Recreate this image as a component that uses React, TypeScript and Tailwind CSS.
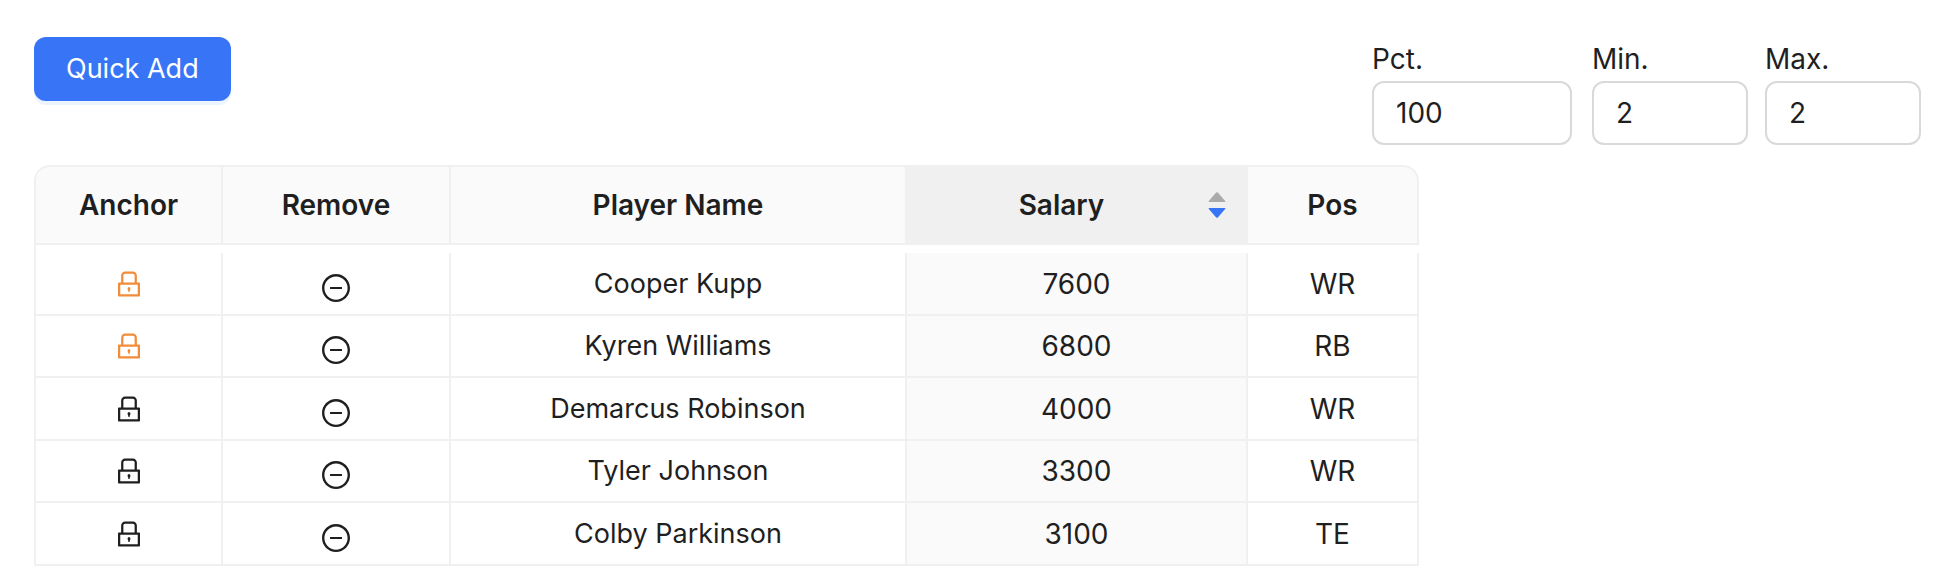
import { useState } from 'react';
import { AiOutlineLock, AiOutlineMinusCircle } from 'react-icons/ai';

interface Player {
  name: string;
  salary: number;
  pos: string;
  anchored: boolean;
}

const INITIAL_PLAYERS: Player[] = [
  { name: 'Cooper Kupp', salary: 7600, pos: 'WR', anchored: true },
  { name: 'Kyren Williams', salary: 6800, pos: 'RB', anchored: true },
  { name: 'Demarcus Robinson', salary: 4000, pos: 'WR', anchored: false },
  { name: 'Tyler Johnson', salary: 3300, pos: 'WR', anchored: false },
  { name: 'Colby Parkinson', salary: 3100, pos: 'TE', anchored: false },
];

interface NumberFieldProps {
  id: string;
  label: string;
  initial: string;
  className: string;
}

function NumberField({ id, label, initial, className }: NumberFieldProps) {
  const [value, setValue] = useState(initial);

  return (
    <div className={className}>
      <label htmlFor={id} className="block leading-11">
        {label}
      </label>
      <input
        id={id}
        inputMode="numeric"
        value={value}
        onChange={(e) => setValue(e.target.value)}
        className="block h-16 w-full rounded-xl border-2 border-[#d9d9d9] bg-white px-[22px] outline-none focus:border-[#3875f6]"
      />
    </div>
  );
}

const headCell = 'h-20 border-y-2 border-r-2 border-[#f0f0f0] p-0 text-center font-semibold';
const bodyCell = 'border-r-2 border-b-2 border-[#f0f0f0] p-0 text-center';

export default function App() {
  const [players, setPlayers] = useState(INITIAL_PLAYERS);
  const [descending, setDescending] = useState(true);

  const sorted = [...players].sort((a, b) => (descending ? b.salary - a.salary : a.salary - b.salary));

  const toggleAnchor = (name: string) =>
    setPlayers((prev) => prev.map((p) => (p.name === name ? { ...p, anchored: !p.anchored } : p)));

  const removePlayer = (name: string) => setPlayers((prev) => prev.filter((p) => p.name !== name));

  return (
    <main className="bg-white pt-[37px] pr-[19px] pb-5 pl-[34px] font-['Inter','Liberation_Sans',sans-serif] text-[28px] leading-11 font-[430] text-[#1f1f1f]">
      <div className="flex items-start justify-between">
        <button
          type="button"
          className="h-16 rounded-xl bg-[#3875f6] px-8 text-[27px] leading-11 text-white shadow-[0_4px_0_#ebf4ff]"
        >
          Quick Add
        </button>
        <div className="flex">
          <NumberField id="pct" label="Pct." initial="100" className="mr-5 w-[200px]" />
          <NumberField id="min" label="Min." initial="2" className="mr-[17px] w-[156px]" />
          <NumberField id="max" label="Max." initial="2" className="w-[156px]" />
        </div>
      </div>

      <table className="mt-5 w-full max-w-[1385px] table-fixed border-separate border-spacing-0 rounded-tl-2xl border-l-2 border-[#f0f0f0]">
        <colgroup>
          <col className="w-[187px]" />
          <col className="w-[228px]" />
          <col className="w-[456px]" />
          <col className="w-[341px]" />
          <col className="w-[171px]" />
        </colgroup>
        <thead>
          <tr>
            <th className={`${headCell} rounded-tl-[14px] bg-[#fafafa]`}>Anchor</th>
            <th className={`${headCell} bg-[#fafafa]`}>Remove</th>
            <th className={`${headCell} bg-[#fafafa]`}>Player Name</th>
            <th className={`${headCell} bg-[#f0f0f0]`} aria-sort={descending ? 'descending' : 'ascending'}>
              <button
                type="button"
                onClick={() => setDescending((d) => !d)}
                className="flex w-full items-center pr-5 pl-4 font-semibold"
              >
                <span className="flex-1">Salary</span>
                <svg viewBox="0 0 18 26" className="ml-2 h-[26px] w-[18px]" aria-hidden="true">
                  <path
                    d="M8.2 0.6Q9 -0.3 9.8 0.6L17.2 9Q17.8 10 16.8 10H1.2Q0.2 10 0.8 9Z"
                    fill={descending ? '#aaaaaa' : '#3875f6'}
                  />
                  <path
                    d="M8.2 25.4Q9 26.3 9.8 25.4L17.2 17Q17.8 16 16.8 16H1.2Q0.2 16 0.8 17Z"
                    fill={descending ? '#3875f6' : '#aaaaaa'}
                  />
                </svg>
              </button>
            </th>
            <th className={`${headCell} rounded-tr-2xl bg-[#fafafa]`}>Pos</th>
          </tr>
        </thead>
        <tbody aria-hidden="true">
          <tr>
            <td colSpan={5} className="h-2 p-0" />
          </tr>
        </tbody>
        <tbody>
          {sorted.map((player) => (
            <tr key={player.name} className="odd:h-[63px] even:h-[62px]">
              <td className={bodyCell}>
                <button
                  type="button"
                  aria-label={`Anchor ${player.name}`}
                  aria-pressed={player.anchored}
                  onClick={() => toggleAnchor(player.name)}
                  className={`block w-full ${player.anchored ? 'text-[#f28c38]' : ''}`}
                >
                  <AiOutlineLock className="mx-auto size-8" />
                </button>
              </td>
              <td className={bodyCell}>
                <button
                  type="button"
                  aria-label={`Remove ${player.name}`}
                  onClick={() => removePlayer(player.name)}
                  className="block w-full pt-2"
                >
                  <AiOutlineMinusCircle className="mx-auto size-8" />
                </button>
              </td>
              <td className={`${bodyCell} text-[27px]`}>{player.name}</td>
              <td className={`${bodyCell} bg-[#fafafa]`}>{player.salary}</td>
              <td className={bodyCell}>{player.pos}</td>
            </tr>
          ))}
        </tbody>
      </table>
    </main>
  );
}
